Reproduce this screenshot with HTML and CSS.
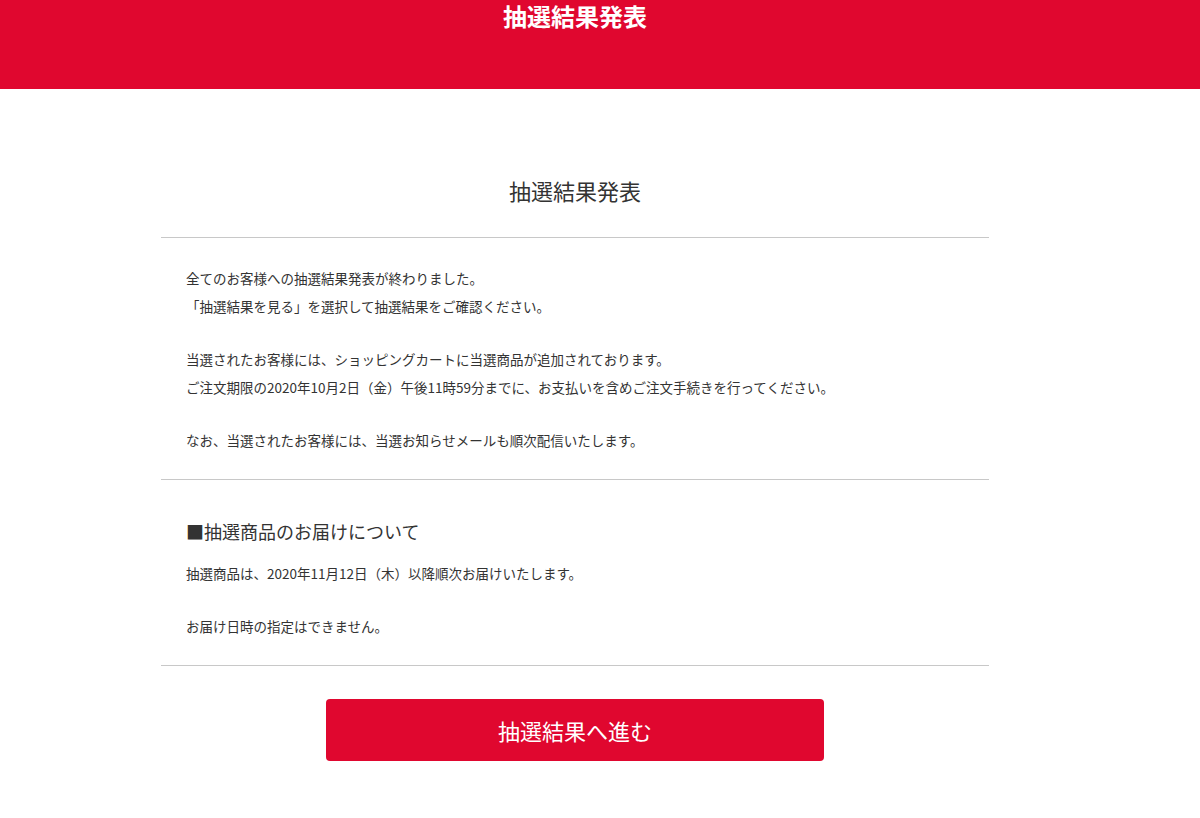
FILE: index.html
```html
<!DOCTYPE html>
<html lang="ja">
<head>
<meta charset="utf-8">
<title>抽選結果発表</title>
<link rel="stylesheet" href="styles.css">
</head>
<body>
<header class="topbar">
  <div class="topbar-inner">
    <h1 class="topbar-title">抽選結果発表</h1>
  </div>
</header>
<div class="page">
  <main class="content">
    <section class="title-block">
      <h2 class="page-title">抽選結果発表</h2>
    </section>
    <section class="block block-notice">
      <p class="para">全てのお客様への抽選結果発表が終わりました。<br>「抽選結果を見る」を選択して抽選結果をご確認ください。</p>
      <p class="para">当選されたお客様には、ショッピングカートに当選商品が追加されております。<br>ご注文期限の2020年10月2日（金）午後11時59分までに、お支払いを含めご注文手続きを行ってください。</p>
      <p class="para">なお、当選されたお客様には、当選お知らせメールも順次配信いたします。</p>
    </section>
    <section class="block block-delivery">
      <h3 class="sub-title">■抽選商品のお届けについて</h3>
      <p class="para">抽選商品は、2020年11月12日（木）以降順次お届けいたします。</p>
      <p class="para">お届け日時の指定はできません。</p>
    </section>
    <div class="actions">
      <a class="btn" href="#">抽選結果へ進む</a>
    </div>
  </main>
</div>
</body>
</html>
```
FILE: styles.css
```css
html, body {
  margin: 0;
  padding: 0;
  background: #fff;
}
body {
  font-family: "Noto Sans CJK JP", "Noto Sans", sans-serif;
  color: #333;
}
.topbar {
  height: 89px;
  background: #e0072f;
}
.topbar-inner {
  width: 1150px;
}
.topbar-title {
  margin: 0;
  padding-top: 0;
  text-align: center;
  color: #fff;
  font-size: 24px;
  font-weight: 700;
  line-height: 32px;
}
.page {
  width: 1150px;
}
.content {
  width: 828px;
  margin: 0 auto;
}
.title-block {
  padding-top: 86px;
  padding-bottom: 32px;
  border-bottom: 1px solid #c8c8c8;
}
.page-title {
  margin: 0;
  text-align: center;
  font-size: 22px;
  font-weight: 400;
  line-height: 30px;
  color: #333;
}
.block {
  padding: 25px;
  border-bottom: 1px solid #c8c8c8;
}
.block-notice {
  padding-top: 26px;
}
.block-delivery {
  padding-top: 23px;
  padding-bottom: 25px;
}
.para {
  margin: 0;
  font-size: 13.5px;
  line-height: 28px;
  color: #333;
}
.para + .para {
  margin-top: 25px;
}
.sub-title {
  margin: 0;
  font-size: 18px;
  font-weight: 400;
  line-height: 56px;
  color: #333;
}
.actions {
  display: flex;
  justify-content: center;
  padding-top: 33px;
}
.btn {
  display: flex;
  align-items: center;
  justify-content: center;
  width: 498px;
  height: 62px;
  border-radius: 4px;
  background: #e0072f;
  color: #fff;
  font-size: 22px;
  text-decoration: none;
}
```
